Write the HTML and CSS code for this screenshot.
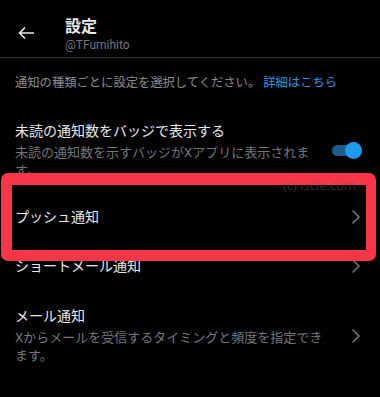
FILE: index.html
```html
<!DOCTYPE html>
<html lang="ja">
<head>
<meta charset="utf-8">
<link rel="stylesheet" href="styles.css">
</head>
<body>
<div class="screen">
  <header class="header">
    <svg class="back" width="16" height="12" viewBox="0 0 16 12"><path d="M15.5 6H1.5M6.5 1L1.5 6L6.5 11" fill="none" stroke="#e7e9ea" stroke-width="1.7" stroke-linecap="round" stroke-linejoin="round"/></svg>
    <div class="htext">
      <div class="htitle">設定</div>
      <div class="handle">@TFumihito</div>
    </div>
  </header>
  <p class="desc">通知の種類ごとに設定を選択してください。 <span class="link">詳細はこちら</span></p>
  <div class="row row-sub row-toggle">
    <div class="rtext">
      <div class="rtitle">未読の通知数をバッジで表示する</div>
      <div class="rsub">未読の通知数を示すバッジがXアプリに表示されます。</div>
    </div>
    <div class="toggle"><span class="track"></span><span class="thumb"></span></div>
  </div>
  <div class="row">
    <div class="rtext"><div class="rtitle">プッシュ通知</div></div>
    <svg class="chev" width="12" height="14" viewBox="0 0 12 14"><path d="M3 1L9 7L3 13" fill="none" stroke="#71767b" stroke-width="1.6" stroke-linecap="round" stroke-linejoin="round"/></svg>
  </div>
  <div class="row">
    <div class="rtext"><div class="rtitle">ショートメール通知</div></div>
    <svg class="chev" width="12" height="14" viewBox="0 0 12 14"><path d="M3 1L9 7L3 13" fill="none" stroke="#71767b" stroke-width="1.6" stroke-linecap="round" stroke-linejoin="round"/></svg>
  </div>
  <div class="row row-sub row-mail">
    <div class="rtext">
      <div class="rtitle">メール通知</div>
      <div class="rsub">Xからメールを受信するタイミングと頻度を指定できます。</div>
    </div>
    <svg class="chev" width="12" height="14" viewBox="0 0 12 14"><path d="M3 1L9 7L3 13" fill="none" stroke="#71767b" stroke-width="1.6" stroke-linecap="round" stroke-linejoin="round"/></svg>
  </div>
  <div class="highlight"></div>
  <div class="watermark">(c) iscle.com</div>
</div>
</body>
</html>
```

FILE: styles.css
```css
html, body {
  margin: 0;
  padding: 0;
  background: #000;
}
body {
  font-family: Roboto, "Noto Sans CJK JP", sans-serif;
  color: #e7e9ea;
  width: 380px;
  height: 397px;
  overflow: hidden;
}
.screen {
  position: relative;
  width: 380px;
  height: 397px;
}
.header {
  box-sizing: border-box;
  height: 58px;
  border-bottom: 1px solid #2f3336;
  display: flex;
  align-items: flex-start;
}
.back {
  margin: 27px 0 0 18px;
}
.htext {
  margin: 17px 0 0 31px;
}
.htitle {
  font-size: 16px;
  line-height: 20px;
  font-weight: 700;
  color: #e7e9ea;
}
.handle {
  font-size: 12px;
  line-height: 16px;
  color: #71767b;
}
.desc {
  margin: 0;
  padding: 16px 15px 14px;
  font-size: 12.3px;
  line-height: 18px;
  color: #8a8d91;
}
.link {
  color: #1d9bf0;
}
.row {
  display: flex;
  align-items: center;
  padding: 15px 18px 14px 15px;
}
.row-sub {
  padding-bottom: 12px;
}
.row-mail {
  padding-top: 16px;
}
.rtext {
  flex: 1;
  min-width: 0;
}
.row-toggle .rtext {
  padding-right: 14px;
}
.row .chev {
  flex: none;
  margin-left: 20px;
}
.rtitle {
  font-size: 14px;
  line-height: 20px;
  color: #e7e9ea;
}
.rsub {
  margin-top: 3px;
  font-size: 13px;
  line-height: 18px;
  color: #71767b;
}
.toggle {
  position: relative;
  flex: none;
  width: 30px;
  height: 17px;
}
.track {
  position: absolute;
  left: 0;
  top: 3px;
  width: 24px;
  height: 11px;
  border-radius: 6px;
  background: #1a5c8c;
}
.thumb {
  position: absolute;
  right: 0;
  top: 0;
  width: 17px;
  height: 17px;
  border-radius: 50%;
  background: #1d9bf0;
}
.highlight {
  position: absolute;
  left: 1px;
  top: 173px;
  width: 375px;
  height: 88px;
  box-sizing: border-box;
  border: 11px solid #f93648;
  border-top-width: 12px;
  border-right-width: 10px;
  border-radius: 7px;
}
.watermark {
  position: absolute;
  left: 283px;
  top: 176px;
  font-family: "Open Sans", sans-serif;
  font-size: 13px;
  line-height: 18px;
  color: rgba(90, 90, 90, 0.55);
}
```
